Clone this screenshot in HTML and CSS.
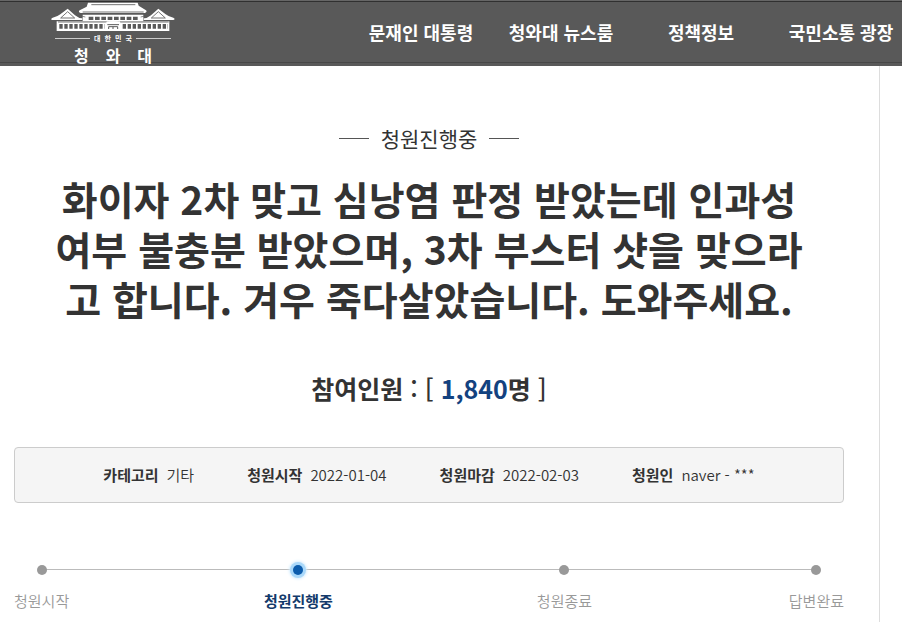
FILE: index.html
```
<!DOCTYPE html>
<html lang="ko">
<head>
<meta charset="utf-8">
<title>청와대 국민청원</title>
<link rel="stylesheet" href="styles.css">
</head>
<body>
<header class="site-header">
  <a class="logo" href="#">
    <svg class="logo-mark" viewBox="30 0 378 99" aria-hidden="true">
      <g fill="#fff">
        <path d="M144 8H293L296 17L318 31Q323 35 315 39H122Q113 36 119 31L140 20Z"/>
        <path d="M83 26L105 46Q118 56 127 55V60H36Q30 57 38 53Q51 51 61 43Z"/>
        <path d="M355 26L333 46Q320 56 311 55V60H400Q408 57 400 53Q387 51 377 43Z"/>
        <path d="M128 44H310V64H128Z"/>
        <path d="M50 64H388V93H50Z"/>
      </g>
      <g fill="none" stroke="#595959" stroke-width="2.5">
        <path d="M154 14H286M128 36H311"/>
        <path d="M83 35L62 54H104ZM355 35L334 54H376Z"/>
        <path d="M117 42Q124 50 136 51M321 42Q314 50 302 51" stroke-width="2"/>
        <path d="M54 66H200M240 66H386"/>
      </g>
      <g fill="none" stroke="#595959" stroke-width="10">
        <path d="M146 55H294" stroke-dasharray="14 5"/>
        <path d="M58 79H194M248 79H384" stroke-width="14" stroke-dasharray="10 5"/>
      </g>
      <path d="M197 93V68Q219 60 242 68V93Z" fill="#fff"/>
      <path d="M202 74H237M206 87V80H233V87M219 80V87" fill="none" stroke="#595959" stroke-width="3"/>
    </svg>
    <span class="logo-country"><span>대</span><span>한</span><span>민</span><span>국</span></span>
    <span class="logo-name"><span>청</span><span>와</span><span>대</span></span>
  </a>
  <nav class="main-nav">
    <a href="#">문재인 대통령</a>
    <a href="#">청와대 뉴스룸</a>
    <a href="#">정책정보</a>
    <a href="#">국민소통 광장</a>
  </nav>
</header>
<main class="petition">
  <p class="status">청원진행중</p>
  <h1 class="title">화이자 2차 맞고 심낭염 판정 받았는데 인과성 여부 불충분 받았으며, 3차 부스터 샷을 맞으라고 합니다. 겨우 죽다살았습니다. 도와주세요.</h1>
  <p class="count"><b>참여인원</b> : [ <strong>1,840</strong><b>명</b> ]</p>
  <dl class="meta">
    <div><dt>카테고리</dt><dd>기타</dd></div>
    <div><dt>청원시작</dt><dd>2022-01-04</dd></div>
    <div><dt>청원마감</dt><dd>2022-02-03</dd></div>
    <div><dt>청원인</dt><dd>naver - ***</dd></div>
  </dl>
  <ol class="steps">
    <li>청원시작</li>
    <li class="current" aria-current="step">청원진행중</li>
    <li>청원종료</li>
    <li>답변완료</li>
  </ol>
</main>
</body>
</html>
```
FILE: styles.css
```
* { box-sizing: border-box; }

body {
  margin: 0;
  display: flex;
  flex-direction: column;
  min-height: 100vh;
  background: #fff;
  color: #333;
  font-family: "Noto Sans CJK KR", "Noto Sans", sans-serif;
}

a { color: inherit; text-decoration: none; }
p, h1, dl, dd, ol { margin: 0; padding: 0; }

.site-header {
  display: flex;
  justify-content: space-between;
  height: 66px;
  padding-left: 50px;
  overflow: hidden;
  background: linear-gradient(#666 1px, #303030 1px 2px, #595959 2px 62px, #474747 62px 63px, #595959 63px);
  color: #fff;
}

.logo {
  display: flex;
  flex-direction: column;
  align-items: center;
  width: 126px;
}
.logo-mark { display: block; width: 126px; height: 33px; }
.logo-country {
  display: flex;
  align-items: center;
  gap: 4px;
  width: 116px;
  font-size: 7px;
  font-weight: 700;
  line-height: 11px;
}
.logo-country::before,
.logo-country::after {
  content: "";
  flex: 1;
  height: 1px;
  background: #ccc;
}
.logo-name {
  display: flex;
  gap: 17px;
  font-size: 16px;
  font-weight: 700;
  line-height: 22px;
}

.main-nav {
  display: grid;
  grid-template-columns: repeat(4, 140px);
  align-items: center;
  margin-right: -9px;
  padding-bottom: 2px;
  font-size: 18px;
  font-weight: 700;
  text-align: center;
}

.petition {
  flex: 1;
  margin-right: 22px;
  padding: 57px 35px 0 14px;
  border-right: 1px solid #ddd;
}

.status {
  display: flex;
  justify-content: center;
  align-items: center;
  gap: 12px;
  font-size: 21px;
  line-height: 30px;
}
.status::before,
.status::after {
  content: "";
  width: 30px;
  height: 1px;
  background: #555;
}

.title {
  padding: 0 40px;
  margin-top: 20px;
  font-size: 39px;
  font-weight: 700;
  line-height: 50px;
  text-align: center;
  word-break: break-all;
}

.count {
  margin-top: 47px;
  font-size: 25px;
  font-weight: 500;
  line-height: 36px;
  text-align: center;
}
.count b { font-weight: 700; }
.count strong { color: #13427f; font-weight: 700; }

.meta {
  display: flex;
  justify-content: center;
  gap: 53px;
  margin-top: 41px;
  padding: 15px 0;
  border: 1px solid #ccc;
  border-radius: 4px;
  background: #f5f5f5;
  font-size: 15px;
  line-height: 24px;
}
.meta div { display: flex; gap: 8px; }
.meta dt { font-weight: 700; }
.meta dd { font-weight: 350; }

.steps {
  position: relative;
  display: grid;
  grid-template-columns: 250fr 273fr 252fr auto;
  margin-top: 62px;
  list-style: none;
  color: #999;
  font-size: 15px;
  font-weight: 350;
  line-height: 24px;
}
.steps::before {
  content: "";
  position: absolute;
  top: 4px;
  left: 28px;
  right: 28px;
  height: 1px;
  background: #bbb;
}
.steps li {
  display: flex;
  flex-direction: column;
  align-items: center;
  gap: 14px;
  justify-self: start;
}
.steps li::before {
  content: "";
  position: relative;
  width: 10px;
  height: 10px;
  border-radius: 50%;
  background: #999;
}
.steps .current { color: #133a6b; font-weight: 700; }
.steps .current::before {
  background: #0b5cad;
  box-shadow: 0 0 0 3px #a9d8fa, 0 0 3px 4px #d3ecfd;
}
```
